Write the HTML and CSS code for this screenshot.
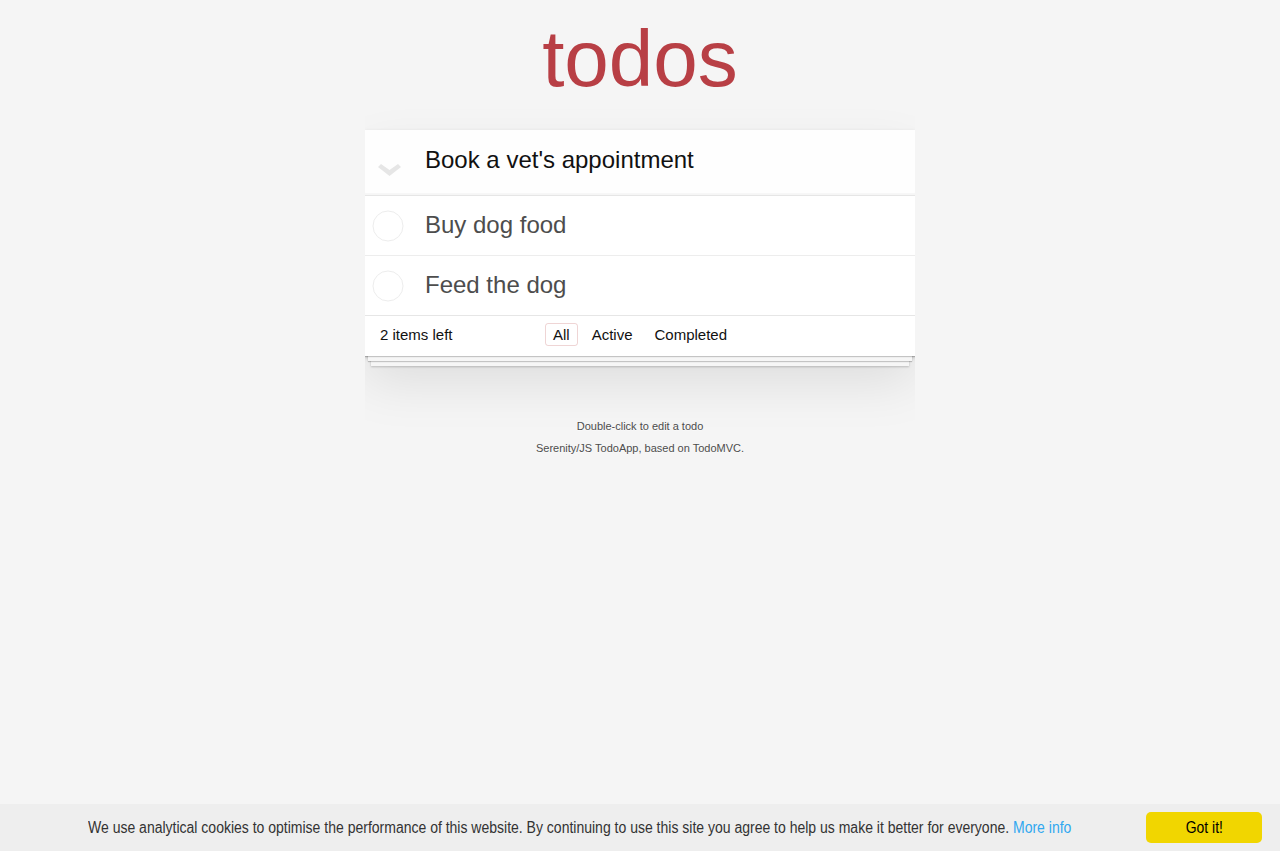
FILE: index.html
```html
<!DOCTYPE html>
<html lang="en">
<head>
<meta charset="utf-8">
<title>Serenity/JS TodoApp</title>
<link rel="stylesheet" href="styles.css">
</head>
<body>
<h1 class="title">todos</h1>
<section class="todoapp">
  <header class="header">
    <label class="toggle-all" aria-label="Mark all as complete">
      <svg width="23" height="12" viewBox="0 0 23 12" aria-hidden="true"><path d="M0 3 L3 0 L11.5 6 L20 0 L23 3 L11.5 12 Z" fill="#e6e6e6"/></svg>
    </label>
    <input class="new-todo" value="Book a vet's appointment" aria-label="New todo">
  </header>
  <section class="main">
    <ul class="todo-list">
      <li class="todo">
        <svg class="toggle" width="32" height="32" viewBox="0 0 32 32" aria-hidden="true"><circle cx="16" cy="16" r="15" fill="none" stroke="#ededed" stroke-width="1"/></svg>
        <label class="todo-label">Buy dog food</label>
      </li>
      <li class="todo">
        <svg class="toggle" width="32" height="32" viewBox="0 0 32 32" aria-hidden="true"><circle cx="16" cy="16" r="15" fill="none" stroke="#ededed" stroke-width="1"/></svg>
        <label class="todo-label">Feed the dog</label>
      </li>
    </ul>
  </section>
  <footer class="footer">
    <span class="todo-count">2 items left</span>
    <ul class="filters">
      <li><a class="filter selected" href="#/">All</a></li>
      <li><a class="filter" href="#/active">Active</a></li>
      <li><a class="filter" href="#/completed">Completed</a></li>
    </ul>
    <span class="spacer"></span>
  </footer>
</section>
<footer class="info">
  <p>Double-click to edit a todo</p>
  <p>Serenity/JS TodoApp, based on TodoMVC.</p>
</footer>
<div class="cookie-banner">
  <span class="cookie-message"><span class="narrow">We use analytical cookies to optimise the performance of this website. By continuing to use this site you agree to help us make it better for everyone. <a class="cookie-more" href="#">More info</a></span></span>
  <a class="cookie-btn" href="#"><span class="narrow-center">Got it!</span></a>
</div>
</body>
</html>
```
FILE: styles.css
```css
html, body {
  margin: 0;
  padding: 0;
}

body {
  font-family: "Liberation Sans", Arial, sans-serif;
  font-size: 14px;
  line-height: 1.4em;
  background: #f5f5f5;
  color: #111;
  max-width: 550px;
  min-width: 230px;
  margin: 0 auto;
  padding-top: 19px;
}

.title {
  margin: 0;
  height: 80px;
  font-size: 80px;
  line-height: 80px;
  font-weight: normal;
  text-align: center;
  color: #b83f45;
}

.todoapp {
  margin-top: 31px;
  background: #fff;
  position: relative;
  box-shadow: 0 2px 4px 0 rgba(0, 0, 0, 0.2), 0 25px 50px 0 rgba(0, 0, 0, 0.1);
}

.header {
  display: flex;
  align-items: center;
  height: 65px;
  box-shadow: inset 0 -2px 1px rgba(0, 0, 0, 0.03);
  background: rgba(0, 0, 0, 0.003);
}

.toggle-all {
  width: 60px;
  height: 65px;
  display: flex;
  align-items: center;
  padding: 14px 0 0 13px;
  box-sizing: border-box;
}

.toggle-all svg {
  display: block;
}

.new-todo {
  flex: 1;
  min-width: 0;
  height: 65px;
  box-sizing: border-box;
  padding: 13px 16px 19px 0;
  border: none;
  outline: none;
  background: transparent;
  font-family: "Liberation Sans", Arial, sans-serif;
  font-size: 24px;
  line-height: 1.4em;
  color: #111;
}

.main {
  border-top: 1px solid #e6e6e6;
}

.todo-list {
  margin: 0;
  padding: 0;
  list-style: none;
}

.todo {
  display: flex;
  align-items: center;
  font-size: 24px;
  border-bottom: 1px solid #ededed;
}

.todo:last-child {
  border-bottom: none;
}

.toggle {
  flex: none;
  margin: 2px 0 0 7px;
  display: block;
}

.todo-label {
  flex: 1;
  padding: 15px 15px 15px 21px;
  line-height: 1.2;
  color: #4d4d4d;
}

.footer {
  position: relative;
  display: grid;
  grid-template-columns: 1fr auto 1fr;
  align-items: center;
  height: 20px;
  padding: 10px 15px;
  font-size: 15px;
  border-top: 1px solid #e6e6e6;
  color: #111;
}

.footer::before {
  content: "";
  position: absolute;
  right: 0;
  bottom: 0;
  left: 0;
  height: 50px;
  overflow: hidden;
  pointer-events: none;
  box-shadow: 0 1px 1px rgba(0, 0, 0, 0.2),
              0 8px 0 -3px #f6f6f6,
              0 9px 1px -3px rgba(0, 0, 0, 0.2),
              0 16px 0 -6px #f6f6f6,
              0 17px 2px -6px rgba(0, 0, 0, 0.2);
}

.todo-count {
  text-align: left;
  position: relative;
  top: -1px;
}

.filters {
  display: flex;
  margin: -3px 0 0;
  padding: 0;
  list-style: none;
  position: relative;
}

.filter {
  display: block;
  margin: 0 3px;
  padding: 3px 7px;
  line-height: 15px;
  border: 1px solid transparent;
  border-radius: 3px;
  color: inherit;
  text-decoration: none;
}

.filter.selected {
  border-color: rgba(175, 47, 47, 0.2);
}

.info {
  margin-top: 65px;
  color: #4d4d4d;
  font-size: 11px;
  text-shadow: 0 1px 0 rgba(255, 255, 255, 0.5);
  text-align: center;
}

.info p {
  margin: 0 0 11px;
  line-height: 1;
}

.cookie-banner {
  position: fixed;
  left: 0;
  right: 0;
  bottom: 0;
  height: 47px;
  display: flex;
  align-items: center;
  background: #eee;
  font-family: "Liberation Sans", Arial, sans-serif;
  font-size: 16px;
  color: #333;
}

.cookie-message {
  flex: 1;
  min-width: 0;
  padding-left: 88px;
  white-space: nowrap;
  padding-top: 1px;
}

.narrow {
  display: inline-block;
  transform: scaleX(0.875);
  transform-origin: left center;
}

.cookie-more {
  color: #31a8f0;
  text-decoration: none;
}

.cookie-btn {
  flex: none;
  margin-right: 18px;
  width: 116px;
  height: 31px;
  line-height: 31px;
  text-align: center;
  border-radius: 5px;
  background: #f1d600;
  color: #000;
  text-decoration: none;
}

.narrow-center {
  display: inline-block;
  transform: scaleX(0.87);
}
```
